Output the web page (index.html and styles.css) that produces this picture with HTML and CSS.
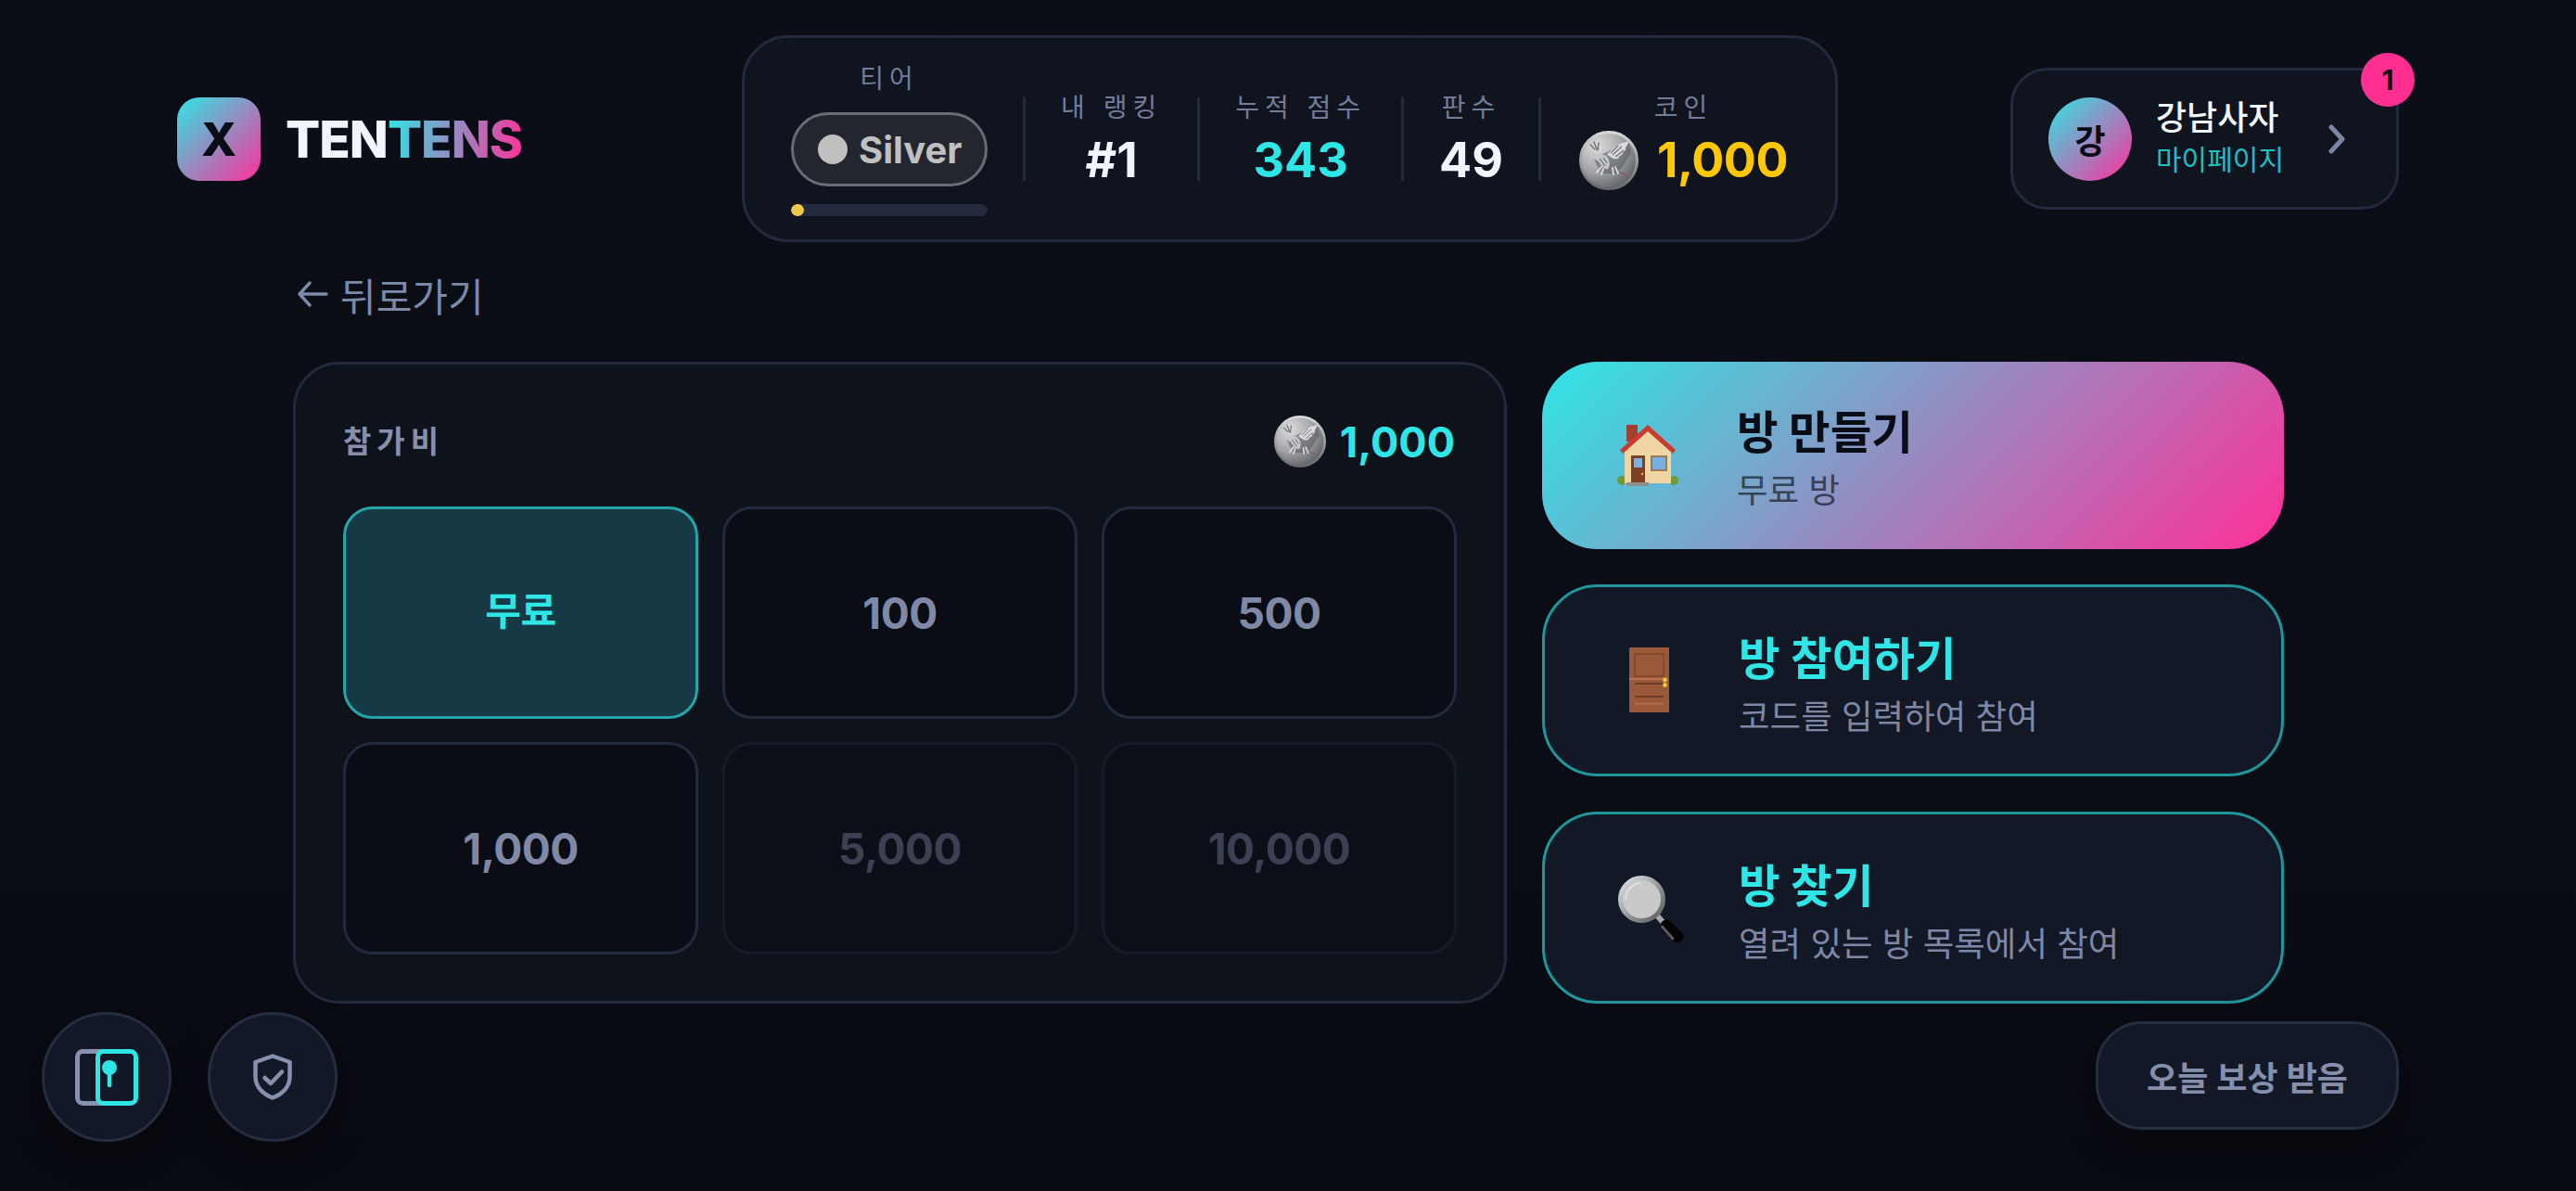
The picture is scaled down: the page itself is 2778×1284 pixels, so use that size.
FILE: index.html
```html
<!DOCTYPE html>
<html lang="ko">
<head>
<meta charset="UTF-8">
<meta name="viewport" content="width=device-width, initial-scale=1.0">
<title>TENTENS</title>
<link rel="stylesheet" href="styles.css">
</head>
<body>
<header class="top-bar">
    <div class="logo">
        <div class="logo-mark">X</div>
        <div class="logo-text">TEN<span class="logo-accent">TENS</span></div>
    </div>

    <div class="stats">
        <div class="stat tier">
            <div class="stat-label">티어</div>
            <div class="tier-pill"><span class="tier-dot"></span>Silver</div>
            <div class="tier-progress"><div class="tier-fill"></div></div>
        </div>
        <div class="stat-divider"></div>
        <div class="stat">
            <div class="stat-label">내 랭킹</div>
            <div class="stat-value">#1</div>
        </div>
        <div class="stat-divider"></div>
        <div class="stat">
            <div class="stat-label">누적 점수</div>
            <div class="stat-value cyan">343</div>
        </div>
        <div class="stat-divider"></div>
        <div class="stat">
            <div class="stat-label">판수</div>
            <div class="stat-value">49</div>
        </div>
        <div class="stat-divider"></div>
        <div class="stat stat-coin">
            <div class="stat-label">코인</div>
            <div class="stat-value gold coin-row">
                <svg class="coin" viewBox="0 0 64 64">
                    <defs>
                        <radialGradient id="coinFace" cx="30%" cy="25%" r="90%">
                            <stop offset="0" stop-color="#dcdddd"/>
                            <stop offset="0.5" stop-color="#a2a4a7"/>
                            <stop offset="1" stop-color="#4f5155"/>
                        </radialGradient>
                        <linearGradient id="coinRim" x1="0" y1="0" x2="0" y2="1">
                            <stop offset="0" stop-color="#d8d9da"/>
                            <stop offset="1" stop-color="#66686b"/>
                        </linearGradient>
                        <symbol id="coinArt" viewBox="0 0 64 64">
                            <circle cx="32" cy="32" r="30.5" fill="url(#coinFace)" stroke="url(#coinRim)" stroke-width="3"/>
                            <path d="M15 29 L30 23 L53 11 L56 24 L47 38 L40 46 L24 46 L19 37 Z" fill="#4e5155" opacity="0.5"/>
                            <path d="M30 26 C36 18 44 13 54 11 C52 15 52 16 50 18 C51 19 50 22 47 23 C48 25 45 27 43 27 C44 30 39 31 37 30 Z" fill="#e2e3e5" opacity="0.9"/>
                            <path d="M36 26 L46 17 M39 28 L48 21 M34 24 L42 16" stroke="#6d7074" stroke-width="1.1"/>
                            <path d="M14 29 C18 25 24 24 29 27 C33 31 34 37 31 41 C27 42 24 38 21 33 C19 31 16 31 14 29 Z" fill="#c6c7ca"/>
                            <path d="M22 30 L28 38 M26 29 L30 35" stroke="#64676b" stroke-width="1.1"/>
                            <path d="M24 39 L19 45 M26 41 L24 47 M36 40 L37 47 M39 39 L42 46" stroke="#dfe0e2" stroke-width="1.8" stroke-linecap="round"/>
                            <path d="M12 15 L17 20 M16 12 L19 20 M21 13 L20 21" stroke="#6f7175" stroke-width="1.4" stroke-linecap="round"/>
                            <path d="M44 45 L50 47" stroke="#8b5a5a" stroke-width="1.6" stroke-linecap="round"/>
                        </symbol>
                    </defs>
                    <use href="#coinArt"/>
                </svg>
                1,000
            </div>
        </div>
    </div>

    <div class="user-box">
        <div class="avatar">강</div>
        <div class="user-info">
            <div class="user-name">강남사자</div>
            <div class="user-link">마이페이지</div>
        </div>
        <svg class="chevron" viewBox="0 0 18 32" fill="none" stroke="#7c86a3" stroke-width="5" stroke-linecap="round" stroke-linejoin="round">
            <path d="M3 3 L15 16 L3 29"/>
        </svg>
        <div class="user-badge">1</div>
    </div>
</header>

<main class="content">
    <div class="back-link">
        <svg class="back-arrow" viewBox="0 0 34 28" fill="none" stroke="#7d89a8" stroke-width="3.4" stroke-linecap="round" stroke-linejoin="round">
            <path d="M32 14 H3 M14 2 L3 14 L14 26"/>
        </svg>
        뒤로가기
    </div>

    <div class="room-layout">
        <section class="fee-card">
            <div class="fee-header">
                <div class="fee-label">참가비</div>
                <div class="fee-balance">
                    <svg class="coin coin-small" viewBox="0 0 64 64"><use href="#coinArt"/></svg>
                    1,000
                </div>
            </div>
            <div class="fee-grid">
                <div class="fee-option selected">무료</div>
                <div class="fee-option">100</div>
                <div class="fee-option">500</div>
                <div class="fee-option">1,000</div>
                <div class="fee-option disabled">5,000</div>
                <div class="fee-option disabled">10,000</div>
            </div>
        </section>

        <section class="room-actions">
            <div class="room-button primary">
                <svg class="room-icon" viewBox="0 0 90 90">
                    <g transform="translate(12 12)">
                        <rect x="9" y="0" width="12" height="18" fill="#a5402f"/>
                        <circle cx="4" cy="60" r="5" fill="#6f9a35"/>
                        <circle cx="60" cy="60" r="5" fill="#6f9a35"/>
                        <path d="M32 5 L57 28 V63 H7 V28 Z" fill="#f1d5a3"/>
                        <path d="M2 27 L32 0 L62 27 L59 31 L32 7 L5 31 Z" fill="#c93a30"/>
                        <rect x="14" y="33" width="15" height="30" fill="#7b4026"/>
                        <rect x="17" y="36" width="9" height="10" fill="#7fb2d8"/>
                        <circle cx="26" cy="53" r="1.2" fill="#f2c23c"/>
                        <rect x="35" y="33" width="18" height="17" fill="#9c7a58"/>
                        <rect x="37" y="35" width="14" height="13" fill="#74b1e0"/>
                        <rect x="9" y="62" width="24" height="4" fill="#8f8f8c"/>
                    </g>
                </svg>
                <div class="room-text">
                    <div class="room-title">방 만들기</div>
                    <div class="room-desc">무료 방</div>
                </div>
            </div>
            <div class="room-button">
                <svg class="room-icon" viewBox="0 0 90 90">
                    <g transform="translate(24 10)">
                        <rect x="0" y="0" width="43" height="70" rx="1" fill="#99593a"/>
                        <rect x="6" y="7" width="31" height="24" fill="none" stroke="#7f4729" stroke-width="1.5"/>
                        <rect x="0" y="33" width="38" height="2" fill="#b8734d"/>
                        <rect x="6" y="38" width="31" height="2" fill="#6d3c22"/>
                        <rect x="6" y="52" width="31" height="2" fill="#6d3c22"/>
                        <rect x="6" y="60" width="31" height="1.5" fill="#b8734d"/>
                        <circle cx="38.5" cy="35" r="2.4" fill="#f4c63a"/>
                        <circle cx="38.5" cy="40.5" r="2.4" fill="#f4c63a"/>
                    </g>
                </svg>
                <div class="room-text">
                    <div class="room-title">방 참여하기</div>
                    <div class="room-desc">코드를 입력하여 참여</div>
                </div>
            </div>
            <div class="room-button">
                <svg class="room-icon" viewBox="0 0 90 90">
                    <defs>
                        <linearGradient id="lensRim" x1="0" y1="0" x2="1" y2="1">
                            <stop offset="0" stop-color="#dfe6ec"/>
                            <stop offset="0.6" stop-color="#8c8f92"/>
                            <stop offset="1" stop-color="#5a5c60"/>
                        </linearGradient>
                    </defs>
                    <g transform="translate(12 11)">
                        <path d="M42 43 L49 51" stroke="#a4a6a8" stroke-width="6"/>
                        <path d="M52 54 L64 66" stroke="#040405" stroke-width="13" stroke-linecap="round"/>
                        <path d="M47.5 55 L59 68" stroke="#5a5c60" stroke-width="3" stroke-linecap="round"/>
                        <circle cx="25.5" cy="25.5" r="23" fill="#c9c9c9" stroke="url(#lensRim)" stroke-width="5"/>
                        <path d="M8 26 A18 18 0 0 1 24 8" fill="none" stroke="#e2e2e2" stroke-width="2"/>
                    </g>
                </svg>
                <div class="room-text">
                    <div class="room-title">방 찾기</div>
                    <div class="room-desc">열려 있는 방 목록에서 참여</div>
                </div>
            </div>
        </section>
    </div>
</main>

<footer class="bottom-bar">
    <div class="round-buttons">
        <div class="round-button">
            <svg class="cards-icon" viewBox="0 0 68 61" fill="none">
                <rect x="2.5" y="2.5" width="44" height="56" rx="6" stroke="#8791ad" stroke-width="5"/>
                <rect x="24.5" y="2.5" width="41" height="56" rx="6" fill="#121826" stroke="#2ee6e6" stroke-width="5"/>
                <circle cx="37" cy="20" r="8" fill="#2ee6e6"/>
                <path d="M37 22 V39" stroke="#2ee6e6" stroke-width="4.5" stroke-linecap="round"/>
            </svg>
        </div>
        <div class="round-button">
            <svg class="shield-icon" viewBox="0 0 42 50" fill="none" stroke="#8791ad" stroke-width="4.5" stroke-linecap="round" stroke-linejoin="round">
                <path d="M21 2.5 L39.5 9 V25 C39.5 36 31 43.5 21 47.5 C11 43.5 2.5 36 2.5 25 V9 Z"/>
                <path d="M12.5 26 L19 32 L31 19.5"/>
            </svg>
        </div>
    </div>
    <div class="reward-button">오늘 보상 받음</div>
</footer>
</body>
</html>
```

FILE: styles.css
```css
* {
    box-sizing: border-box;
}

html, body {
    height: 100%;
    margin: 0;
}

body {
    background: linear-gradient(180deg, #0b0e16 0%, #0a0d14 60%, #090b12 100%);
    font-family: "Inter", "Noto Sans CJK KR", sans-serif;
    color: #f1f5ff;
    overflow: hidden;
}

/* top bar */
.top-bar {
    display: flex;
    align-items: center;
    padding: 38px 191px 0;
}

.logo {
    display: flex;
    align-items: center;
    gap: 27px;
    width: 609px;
}

.logo-mark {
    width: 90px;
    height: 90px;
    border-radius: 24px;
    background: linear-gradient(135deg, #2ee6e6, #ff2f9a);
    color: #0a0d15;
    font-size: 50px;
    font-weight: 800;
    display: flex;
    align-items: center;
    justify-content: center;
}

.logo-text {
    font-size: 55px;
    font-weight: 800;
    letter-spacing: -1px;
}

.logo-accent {
    background: linear-gradient(100deg, #2ee6e6, #ff2f9a);
    -webkit-background-clip: text;
    background-clip: text;
    color: transparent;
}

.stats {
    display: flex;
    align-items: center;
    gap: 38px;
    height: 223px;
    padding: 0 51px 0 50px;
    background-color: #10141f;
    border: 3px solid #232a3d;
    border-radius: 50px;
}

.stat {
    display: flex;
    flex-direction: column;
    align-items: center;
    gap: 10px;
    margin-top: 7px;
}

.stat-coin {
    margin-left: 3px;
}

.stat-label {
    font-size: 28px;
    line-height: 30px;
    letter-spacing: 6px;
    color: #737d9a;
    white-space: pre;
}

.stat-value {
    font-size: 52px;
    line-height: 64px;
    font-weight: 700;
}

.cyan {
    color: #2ee6e6;
}

.gold {
    color: #ffc800;
}

.coin-row {
    display: flex;
    align-items: center;
    gap: 20px;
    letter-spacing: -0.5px;
}

.coin {
    width: 64px;
    height: 64px;
    flex: none;
}

.coin-small {
    width: 56px;
    height: 56px;
}

.stat-divider {
    width: 3px;
    height: 90px;
    background-color: #232a3d;
}

.tier {
    gap: 0;
    margin-top: 4px;
}

.tier-pill {
    display: flex;
    align-items: center;
    gap: 12px;
    width: 212px;
    height: 80px;
    margin-top: 21px;
    padding-left: 26px;
    border: 3px solid #6a6c72;
    border-radius: 40px;
    background-color: #23262f;
    color: #c0c0c0;
    font-size: 40px;
    font-weight: 700;
}

.tier-dot {
    width: 32px;
    height: 32px;
    border-radius: 50%;
    background-color: #c0c0c0;
}

.tier-progress {
    width: 212px;
    height: 13px;
    margin-top: 19px;
    border-radius: 7px;
    background-color: #232a3d;
    overflow: hidden;
}

.tier-fill {
    width: 14px;
    height: 100%;
    border-radius: 7px;
    background-color: #ecc94b;
}

.user-box {
    position: relative;
    display: flex;
    align-items: center;
    width: 419px;
    height: 153px;
    margin-left: auto;
    padding-left: 38px;
    background-color: #10141f;
    border: 3px solid #232a3d;
    border-radius: 40px;
}

.avatar {
    width: 90px;
    height: 90px;
    border-radius: 50%;
    background: linear-gradient(135deg, #2ee6e6, #ff2f9a);
    color: #0a0d15;
    font-size: 36px;
    font-weight: 700;
    display: flex;
    align-items: center;
    justify-content: center;
}

.user-info {
    margin: 0 0 4px 26px;
    width: 186px;
}

.user-name {
    font-size: 36px;
    line-height: 46px;
    font-weight: 500;
}

.user-link {
    margin-top: 2px;
    font-size: 30px;
    line-height: 40px;
    color: #22bcc2;
}

.chevron {
    width: 18px;
    height: 32px;
}

.user-badge {
    position: absolute;
    top: -19px;
    right: -20px;
    width: 58px;
    height: 58px;
    border-radius: 50%;
    background-color: #ff2f92;
    color: #0a0d15;
    font-size: 30px;
    font-weight: 700;
    display: flex;
    align-items: center;
    justify-content: center;
}

/* main content */
.content {
    padding: 0 315px 0 316px;
}

.back-link {
    display: flex;
    align-items: center;
    gap: 13px;
    height: 60px;
    margin-top: 26px;
    margin-left: 4px;
    font-size: 42px;
    color: #7d89a8;
}

.back-arrow {
    width: 34px;
    height: 28px;
}

.room-layout {
    display: flex;
    gap: 38px;
    margin-top: 43px;
}

.fee-card {
    flex: 0 0 1309px;
    height: 692px;
    padding: 51px;
    background-color: #0e121b;
    border: 3px solid #232a3d;
    border-radius: 50px;
}

.fee-header {
    display: flex;
    align-items: center;
    justify-content: space-between;
    height: 56px;
    margin-top: 4px;
}

.fee-label {
    margin-top: -5px;
    font-size: 33px;
    font-weight: 600;
    letter-spacing: 6px;
    color: #8790ab;
}

.fee-balance {
    display: flex;
    align-items: center;
    gap: 15px;
    margin-right: 2px;
    font-size: 45px;
    font-weight: 700;
    color: #2ee6e6;
}

.fee-grid {
    display: grid;
    grid-template-columns: repeat(3, 1fr);
    grid-auto-rows: 229px;
    gap: 25px 26px;
    margin-top: 42px;
}

.fee-option {
    display: flex;
    align-items: center;
    justify-content: center;
    background-color: #0a0d15;
    border: 3px solid #232a3d;
    border-radius: 32px;
    color: #7f89a6;
    font-size: 46px;
    font-weight: 700;
    letter-spacing: -0.5px;
}

.fee-option.selected {
    padding-bottom: 10px;
    background-color: #153a45;
    border-color: #25a5a8;
    color: #2ee6e6;
    font-size: 42px;
}

.fee-option.disabled {
    opacity: 0.4;
}

.room-actions {
    flex: 0 0 800px;
    display: flex;
    flex-direction: column;
    gap: 37.5px;
}

.room-button {
    display: flex;
    align-items: center;
    gap: 52px;
    height: 207.5px;
    padding: 0 67px;
    background-color: #121826;
    border: 3px solid #20959b;
    border-radius: 60px;
}

.room-button.primary {
    height: 202px;
    padding: 0 70px;
    gap: 50px;
    border: none;
    background: linear-gradient(135deg, #2ee6e6, #ff2f9a);
}

.room-icon {
    width: 90px;
    height: 90px;
    flex: none;
}

.room-text {
    margin-top: 9px;
}

.primary .room-text {
    margin-top: 6px;
}

.room-title {
    font-size: 48.5px;
    line-height: 60px;
    font-weight: 700;
    color: #2ee6e6;
}

.room-desc {
    margin-top: 10px;
    font-size: 36.5px;
    line-height: 44px;
    color: #7e88a5;
}

.primary .room-title {
    color: #0a0d15;
}

.primary .room-desc {
    color: rgba(10, 13, 21, 0.65);
}

/* bottom bar */
.bottom-bar {
    display: flex;
    align-items: center;
    justify-content: space-between;
    margin-top: 9px;
    padding: 0 191px 0 45px;
}

.round-buttons {
    display: flex;
    gap: 39px;
}

.round-button {
    width: 140px;
    height: 140px;
    border-radius: 50%;
    background-color: #121826;
    border: 3px solid #262d40;
    box-shadow: 0 12px 40px rgba(0, 0, 0, 0.4);
    display: flex;
    align-items: center;
    justify-content: center;
}

.cards-icon {
    width: 68px;
    height: 61px;
}

.shield-icon {
    width: 42px;
    height: 50px;
}

.reward-button {
    display: flex;
    align-items: center;
    justify-content: center;
    width: 327px;
    height: 117px;
    margin-top: -3px;
    background-color: #121826;
    border: 3px solid #262d40;
    border-radius: 50px;
    box-shadow: 0 12px 40px rgba(0, 0, 0, 0.4);
    color: #858fac;
    font-size: 36px;
    font-weight: 600;
}
```
